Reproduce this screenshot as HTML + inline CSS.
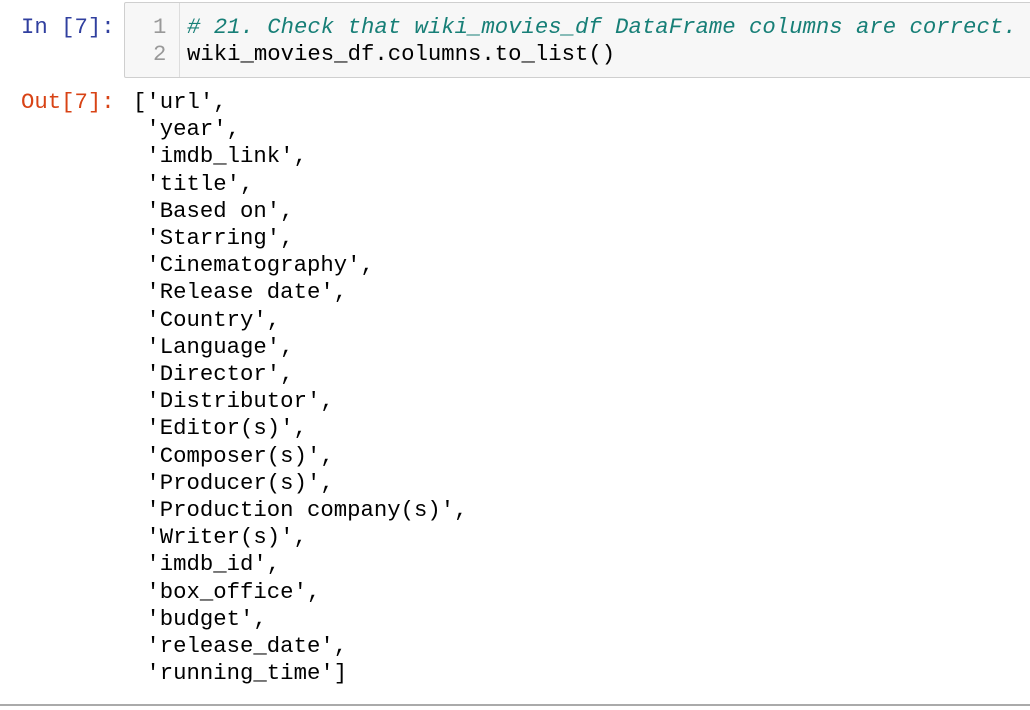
<!DOCTYPE html>
<html><head><style>
body{margin:0;width:1030px;height:710px;background:#fff;position:relative;overflow:hidden;font-family:"Liberation Mono",monospace;font-size:22.3px;}
.p{position:absolute;white-space:pre;line-height:27px;}
.box{position:absolute;left:124px;top:2px;width:920px;height:74px;background:#f7f7f7;border:1px solid #cfcfcf;border-radius:2px;}
.gut{position:absolute;left:179px;top:3px;width:1px;height:74px;background:#ddd;}
.ln{color:#999;}
.cm{font-style:italic;color:#177f77;}
</style></head><body>
<div class="p" style="left:21px;top:14px;color:#303f9f;">In [7]:</div>
<div class="box"></div>
<div class="gut"></div>
<div class="p ln" style="left:153px;top:14px;">1
2</div>
<div class="p" style="left:187px;top:14px;color:#000;"><span class="cm"># 21. Check that wiki_movies_df DataFrame columns are correct.</span>
wiki_movies_df.columns.to_list()</div>
<div class="p" style="left:21px;top:89px;color:#d84315;">Out[7]:</div>
<div class="p" style="left:133px;top:89px;line-height:27.2px;color:#000;">['url',
 'year',
 'imdb_link',
 'title',
 'Based on',
 'Starring',
 'Cinematography',
 'Release date',
 'Country',
 'Language',
 'Director',
 'Distributor',
 'Editor(s)',
 'Composer(s)',
 'Producer(s)',
 'Production company(s)',
 'Writer(s)',
 'imdb_id',
 'box_office',
 'budget',
 'release_date',
 'running_time']</div>
<div style="position:absolute;left:0;top:704px;width:1030px;height:2px;background:#aaa;"></div>
</body></html>
